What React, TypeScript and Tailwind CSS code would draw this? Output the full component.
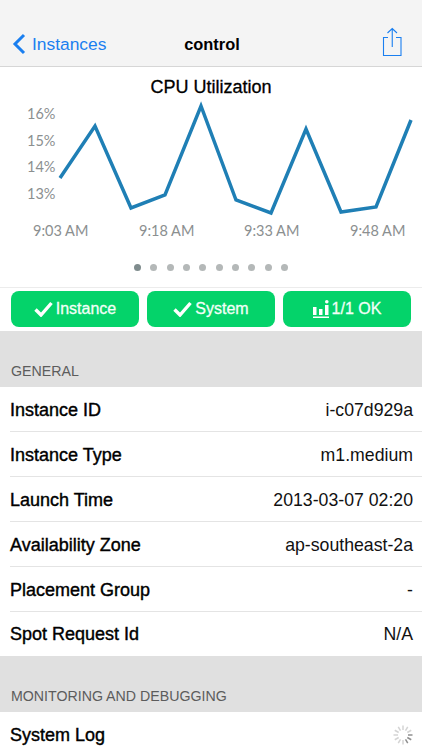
import React from "react";

const font = { fontFamily: '"Liberation Sans", Arial, sans-serif' };

function Row({ label, value, last }: { label: string; value?: string; last?: boolean }) {
  return (
    <div className="bg-white pl-[10px]">
      <div className={"flex items-center justify-between pr-[9px] " + (last ? "h-[44px]" : "h-[45px] border-b border-[#e4e4e4] pt-[2px]")}>
        <span className="text-[18px] font-medium text-black [-webkit-text-stroke:0.4px_black]">{label}</span>
        {value && <span className="text-[17.7px] text-[#111]">{value}</span>}
      </div>
    </div>
  );
}

function Check() {
  return (
    <svg width="19" height="16" viewBox="0 0 19 16" className="shrink-0">
      <path d="M1.5 8.5 L7 14 L17.5 2" fill="none" stroke="white" strokeWidth="3.4" />
    </svg>
  );
}

function Bars() {
  return (
    <svg width="16" height="19" viewBox="0 0 16 19" className="shrink-0" fill="white">
      <rect x="0" y="7" width="3.5" height="8" />
      <rect x="6" y="9" width="3.5" height="6" />
      <rect x="12" y="5" width="3.5" height="10" />
      <circle cx="13.8" cy="1.8" r="1.8" />
      <rect x="0" y="16.5" width="16" height="1.5" />
    </svg>
  );
}

function Btn({ icon, text }: { icon: React.ReactNode; text: string }) {
  return (
    <div className="flex h-[36px] flex-1 items-center justify-center gap-[3px] rounded-[8px] bg-[#04d36a] text-[16px] font-medium text-[#f2fff7] [-webkit-text-stroke:0.3px_#f2fff7]">
      {icon}
      <span>{text}</span>
    </div>
  );
}

function Spinner() {
  const spokes = Array.from({ length: 12 }, (_, i) => i);
  return (
    <svg width="22" height="22" viewBox="0 0 22 22">
      {spokes.map((i) => (
        <line
          key={i}
          x1="11"
          y1="1.5"
          x2="11"
          y2="6"
          stroke={i >= 3 && i <= 5 ? "#8f8f8f" : "#d4d4d4"}
          strokeWidth="1.5"
          transform={`rotate(${i * 30} 11 11)`}
        />
      ))}
    </svg>
  );
}

export default function App() {
  const pts = "60,178 95,126 131,208 165,195 201,106 236,200 271,213 306,129 341,212 376,207 411,120";
  const labelFont = { fontFamily: 'Lato, "Open Sans", sans-serif' };
  return (
    <div className="h-[750px] w-[422px] overflow-hidden bg-white" style={font}>
      <div className="flex h-[67px] items-end justify-between border-b border-[#d6d6d6] bg-[#f4f4f4] pb-[9px] pl-[12px] pr-[18px]">
        <div className="flex w-[130px] items-center gap-[6px] text-[#1a7ff0]">
          <svg width="14" height="22" viewBox="0 0 14 22" className="shrink-0">
            <path d="M12 2 L3 11 L12 20" fill="none" stroke="#1a7ff0" strokeWidth="3" />
          </svg>
          <span className="text-[17.4px]">Instances</span>
        </div>
        <span className="text-[16.4px] font-bold text-black">control</span>
        <div className="flex w-[122px] justify-end">
          <svg width="24" height="30" viewBox="0 0 24 30" className="mb-[0px]">
            <path
              d="M8 10.5 H3.5 V28.5 H21 V10.5 H16 M12.25 20 V1.5 M7.5 6 L12.25 1.5 L17 6"
              fill="none"
              stroke="#1a7ff0"
              strokeWidth="1.1"
            />
          </svg>
        </div>
      </div>

      <div className="flex h-[221px] flex-col items-center border-b border-[#ececec]">
        <div className="pt-[10px] text-[18px] font-medium leading-[20px] text-black [-webkit-text-stroke:0.3px_black]">
          CPU Utilization
        </div>
        <svg width="422" height="160" viewBox="0 97 422 160" className="block">
          <g fill="#8b8f90" fontSize="14.5" style={labelFont}>
            <text x="27" y="119">16%</text>
            <text x="27" y="146">15%</text>
            <text x="27" y="172">14%</text>
            <text x="27" y="199">13%</text>
            <text x="33" y="236">9:03 AM</text>
            <text x="139" y="236">9:18 AM</text>
            <text x="244" y="236">9:33 AM</text>
            <text x="350" y="236">9:48 AM</text>
          </g>
          <polyline points={pts} fill="none" stroke="#1f7fb5" strokeWidth="3.5" strokeLinejoin="miter" />
        </svg>
        <div className="mt-[7px] flex gap-[9.3px]">
          {Array.from({ length: 10 }, (_, i) => (
            <div key={i} className={"h-[7px] w-[7px] rounded-full " + (i === 0 ? "bg-[#7f8c8d]" : "bg-[#b4b8b8]")} />
          ))}
        </div>
      </div>

      <div className="flex gap-[8px] bg-white px-[11px] pb-[4px] pt-[3px]">
        <Btn icon={<Check />} text="Instance" />
        <Btn icon={<Check />} text="System" />
        <Btn icon={<Bars />} text="1/1 OK" />
      </div>

      <div className="flex h-[56px] items-end bg-[#e0e0e0] pb-[5px] pl-[11px] text-[14.2px] text-[#5c5c5c]">GENERAL</div>
      <Row label="Instance ID" value="i-c07d929a" />
      <Row label="Instance Type" value="m1.medium" />
      <Row label="Launch Time" value="2013-03-07 02:20" />
      <Row label="Availability Zone" value="ap-southeast-2a" />
      <Row label="Placement Group" value="-" />
      <Row label="Spot Request Id" value="N/A" last />
      <div className="flex h-[56px] items-end bg-[#e0e0e0] pb-[5px] pl-[11px] text-[14.2px] text-[#5c5c5c]">
        MONITORING AND DEBUGGING
      </div>
      <div className="flex h-[45px] items-center justify-between bg-white pl-[10px] pr-[8px] pt-[1px]">
        <span className="text-[18px] font-medium text-black [-webkit-text-stroke:0.4px_black]">System Log</span>
        <Spinner />
      </div>
    </div>
  );
}
